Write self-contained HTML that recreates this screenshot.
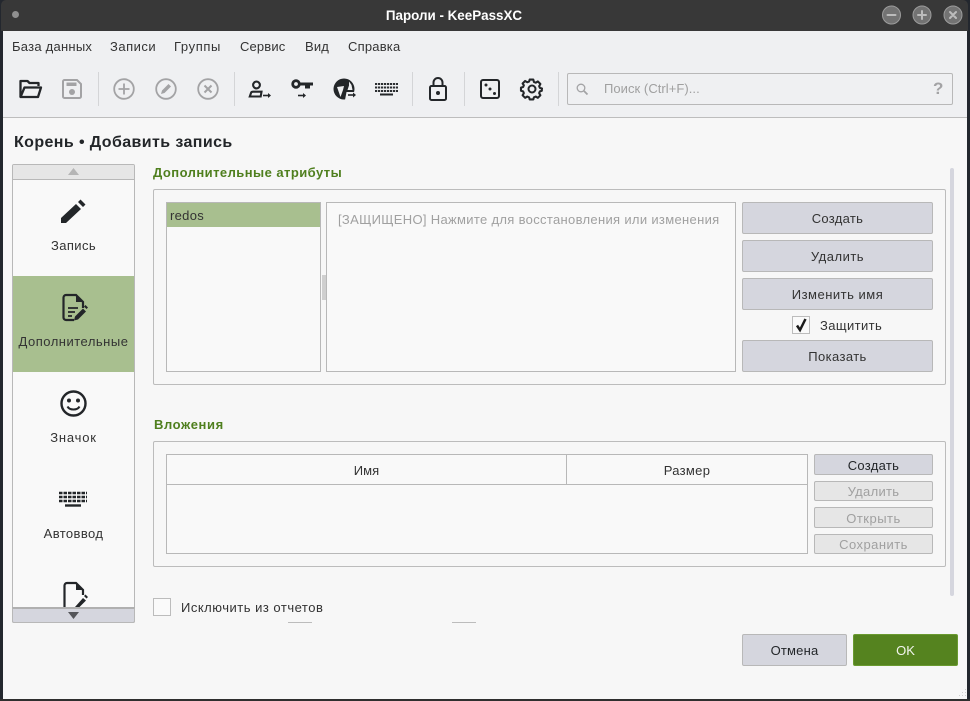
<!DOCTYPE html>
<html><head><meta charset="utf-8">
<style>
html,body{margin:0;padding:0;width:970px;height:701px;overflow:hidden;background:#23272e}
*{box-sizing:border-box}
body{font-family:"Liberation Sans","Noto Sans CJK SC",sans-serif;font-size:13px;color:#333}
.a{position:absolute}
.t{position:absolute;white-space:nowrap;line-height:16px}
.c{text-align:center}
.btn{position:absolute;background:#d5d6de;border:1px solid #b8b8b8;border-radius:2px;text-align:center;color:#333}
.dis{background:#e6e6e6;color:#a0a0a0}
.sep{position:absolute;width:1px;height:34px;top:72px;background:#d4d5d7}
svg{position:absolute;overflow:visible}
</style></head>
<body>
<div class="a" style="left:3px;top:31px;width:964px;height:668px;background:#f7f7f7"></div>
<div class="a" style="left:1px;top:0;width:967px;height:31px;background:#383838;border-radius:5px 5px 0 0"></div>
<div class="a" style="left:3px;top:31px;width:964px;height:86px;background:#eff0f2"></div>
<div class="a" style="left:3px;top:117px;width:964px;height:1px;background:#bdbdbd"></div>
<div class="a" style="left:0;top:699px;width:970px;height:2px;background:#2f2f2f"></div>
<div class="a" style="left:12px;top:11px;width:7px;height:7px;border-radius:50%;background:#8f8f8f"></div>
<div class="t c" style="left:354px;top:8px;width:200px;color:#fff;font-weight:bold;font-size:13.4px">Пароли - KeePassXC</div>

<svg style="left:882px;top:5px" width="84" height="20" viewBox="0 0 84 20">
<g fill="#737373" stroke="#9c9c9c"><circle cx="9.500" cy="10" r="9"/><circle cx="40" cy="10" r="9"/><circle cx="71" cy="10" r="9"/></g>
<g stroke="#bcbcbc" stroke-width="2" stroke-linecap="round"><path d="M5.500 10h8M36 10h8M40 6v8M68 7l6 6M74 7l-6 6"/></g>
</svg>

<div class="t" style="left:12px;top:39px;letter-spacing:.25px">База данных</div>
<div class="t" style="left:110px;top:39px;letter-spacing:.5px">Записи</div>
<div class="t" style="left:174px;top:39px;letter-spacing:.6px">Группы</div>
<div class="t" style="left:240px;top:39px;letter-spacing:.15px">Сервис</div>
<div class="t" style="left:305px;top:39px;letter-spacing:.15px">Вид</div>
<div class="t" style="left:348px;top:39px;letter-spacing:.2px">Справка</div>

<!-- toolbar icons -->
<svg style="left:19px;top:79px" width="24" height="20" viewBox="0 0 24 20"><path d="M1.500 18V2h7l2 2h9v3" fill="none" stroke="#232629" stroke-width="2.300" stroke-linejoin="round"/><path d="M1.500 18h17.500l3-9.500H5.500z" fill="none" stroke="#232629" stroke-width="2.300" stroke-linejoin="round"/></svg>
<svg style="left:62px;top:79px" width="20" height="20" viewBox="0 0 20 20"><path d="M1 2.500A1.500 1.500 0 0 1 2.500 1H15l4 4v12.500a1.500 1.500 0 0 1-1.500 1.500h-15A1.500 1.500 0 0 1 1 17.500z" fill="none" stroke="#a3a3a5" stroke-width="2"/><path d="M4.500 3.500h10v3.500h-10z" fill="#a3a3a5"/><circle cx="10" cy="13" r="3" fill="#a3a3a5"/></svg>
<div class="sep" style="left:98px"></div>
<svg style="left:113px;top:78px" width="22" height="22" viewBox="0 0 22 22"><circle cx="11" cy="11" r="9.800" fill="none" stroke="#a3a3a5" stroke-width="1.800"/><path d="M11 5.500v11M5.500 11h11" stroke="#a3a3a5" stroke-width="1.800"/></svg>
<svg style="left:155px;top:78px" width="22" height="22" viewBox="0 0 22 22"><circle cx="11" cy="11" r="9.800" fill="none" stroke="#a3a3a5" stroke-width="1.800"/><path d="M6 16l1-3.500 6.500-6.500 2.500 2.500L9.500 15z" fill="#a3a3a5"/></svg>
<svg style="left:197px;top:78px" width="22" height="22" viewBox="0 0 22 22"><circle cx="11" cy="11" r="9.800" fill="none" stroke="#a3a3a5" stroke-width="1.800"/><path d="M7.500 7.500l7 7M14.500 7.500l-7 7" stroke="#a3a3a5" stroke-width="2"/></svg>
<div class="sep" style="left:234px"></div>
<svg style="left:248px;top:79px" width="24" height="20" viewBox="0 0 24 20"><circle cx="8.500" cy="6" r="3.400" fill="none" stroke="#232629" stroke-width="2.100"/><path d="M1.800 17.500l1.300-3.800c.3-.7 1-1 2-1h8.400l-.8 4.800z" fill="none" stroke="#232629" stroke-width="2.100"/><path d="M15 16.500h7" stroke="#232629" stroke-width="1.600"/><path d="M20 14l3 2.500-3 2.500z" fill="#232629"/></svg>
<svg style="left:291px;top:79px" width="24" height="20" viewBox="0 0 24 20"><circle cx="5" cy="5" r="3.300" fill="none" stroke="#232629" stroke-width="2.800"/><path d="M8 3.500h14v3h-3v3h-5v-3H8z" fill="#232629"/><path d="M7 16.500h7" stroke="#232629" stroke-width="1.600"/><path d="M12 14l3 2.500-3 2.500z" fill="#232629"/></svg>
<svg style="left:333px;top:78px" width="24" height="22" viewBox="0 0 24 22"><circle cx="11" cy="11" r="10.500" fill="#232629"/><path d="M16 3.500l2.500 3.500 1 5h-5l1.500-4.500zM4 9l7-1-1 4-2.500 7" fill="#eff0f2"/><path d="M13.500 14h10.500v8H12z" fill="#eff0f2"/><path d="M15 17h6.500" stroke="#232629" stroke-width="1.600"/><path d="M20 14.500l3 2.500-3 2.500z" fill="#232629"/></svg>
<svg style="left:375px;top:83px" width="23" height="13" viewBox="0 0 23 13"><path d="M0 1h23M0 4.500h23M0 8h23" stroke="#2b2e31" stroke-width="2" stroke-dasharray="2.200 .8"/><path d="M5 11.500h13" stroke="#232629" stroke-width="2"/></svg>
<div class="sep" style="left:412px"></div>
<svg style="left:429px;top:77px" width="18" height="24" viewBox="0 0 18 24"><rect x="1" y="9" width="16" height="14" rx="1.500" fill="none" stroke="#232629" stroke-width="2"/><path d="M4.500 9V5.500a4.500 4.500 0 0 1 9 0V9" fill="none" stroke="#232629" stroke-width="2"/><circle cx="9" cy="16" r="2" fill="#232629"/></svg>
<div class="sep" style="left:464px"></div>
<svg style="left:480px;top:79px" width="20" height="20" viewBox="0 0 20 20"><rect x="1" y="1" width="18" height="18" rx="2" fill="none" stroke="#232629" stroke-width="2"/><circle cx="6" cy="6" r="1.500" fill="#232629"/><circle cx="10" cy="10" r="1.500" fill="#232629"/><circle cx="14.500" cy="14.500" r="1.500" fill="#232629"/></svg>
<svg style="left:521px;top:78px" width="22" height="22" viewBox="0 0 22 22"><circle cx="11" cy="11" r="3.500" fill="none" stroke="#232629" stroke-width="2"/><path d="M9 1.500h4l.7 2.700 2 .8 2.400-1.400 2.800 2.800-1.400 2.400.8 2 2.400.7-.2 0V14l-2.200.6-.8 2 1.400 2.400-2.800 2.800-2.400-1.400-2 .8-.7 2.400H9l-.7-2.400-2-.8-2.400 1.400L1.100 19l1.400-2.400-.8-2-2.400-.6v-3.500l2.400-.7.800-2L1.100 5.900 3.900 3.100l2.400 1.400 2-.8z" transform="translate(.6 .2) scale(.9)" fill="none" stroke="#232629" stroke-width="2.300" stroke-linejoin="round"/></svg>
<div class="sep" style="left:558px"></div>

<div class="a" style="left:567px;top:73px;width:386px;height:32px;background:#eff0f2;border:1px solid #b8b8b8;border-radius:2px"></div>
<svg style="left:576px;top:83px" width="13" height="13" viewBox="0 0 13 13"><circle cx="5" cy="5" r="3.800" fill="none" stroke="#a3a3a5" stroke-width="1.300"/><path d="M8 8l3.500 3.500" stroke="#a3a3a5" stroke-width="1.800"/></svg>
<div class="t" style="left:604px;top:81px;color:#a0a0a0;letter-spacing:.05px">Поиск (Ctrl+F)...</div>
<div class="t" style="left:933px;top:81px;color:#a3a3a5;font-weight:bold;font-size:17px">?</div>

<div class="t" style="left:14px;top:135px;font-weight:bold;font-size:16px;color:#232629;letter-spacing:.4px">Корень • Добавить запись</div>

<!-- sidebar -->
<div class="a" style="left:12px;top:164px;width:123px;height:459px;background:#f9f9f9;border:1px solid #b8b8b8;border-radius:2px;overflow:hidden">
<div class="a" style="left:0;top:0;width:121px;height:15px;background:#e6e6e6;border-bottom:1px solid #b8b8b8"></div>
<div class="a" style="left:0;top:111px;width:121px;height:96px;background:#a8bf8f"></div>
</div>
<svg style="left:68px;top:168px" width="11" height="8"><path d="M5.500 0L11 7H0z" fill="#b5b5b5"/></svg>

<svg style="left:61px;top:199px" width="25" height="25" viewBox="0 0 25 25"><path d="M0 24v-5L15 5l5 5L5 24zM17 3l2.500-2.500 5 5L22 8z" fill="#232629"/></svg>
<div class="t c" style="left:13px;top:238px;width:121px;letter-spacing:.4px">Запись</div>

<svg style="left:62px;top:294px" width="26" height="28" viewBox="0 0 26 28"><path d="M12 26H4a2.500 2.500 0 0 1-2.500-2.500v-20A2.500 2.500 0 0 1 4 1h10l7 7v6" fill="none" stroke="#232629" stroke-width="2.200"/><path d="M14 1v7h7z" fill="#232629"/><path d="M6 14h10M6 18h7M6 22h4" stroke="#232629" stroke-width="1.800"/><path d="M12 26.500l1-4 8-8 3 3-8 8zM22 12.500l1.500-1.500 2.500 2.500-1.500 1.500z" fill="#232629"/></svg>
<div class="t c" style="left:13px;top:334px;width:121px;letter-spacing:.5px">Дополнительные</div>

<svg style="left:60px;top:390px" width="27" height="27" viewBox="0 0 27 27"><circle cx="13.500" cy="13.500" r="12" fill="none" stroke="#232629" stroke-width="2.400"/><circle cx="9" cy="10.500" r="2" fill="#232629"/><circle cx="18" cy="10.500" r="2" fill="#232629"/><path d="M7.500 16.500c2 4 10 4 12 0" fill="none" stroke="#232629" stroke-width="2"/></svg>
<div class="t c" style="left:13px;top:430px;width:121px;letter-spacing:.8px">Значок</div>

<svg style="left:59px;top:491px" width="28" height="16" viewBox="0 0 28 16"><path d="M0 2h28M0 6h28M0 10h28" stroke="#232629" stroke-width="2.400" stroke-dasharray="3.500 1"/><path d="M6 14.500h16" stroke="#232629" stroke-width="2.400"/></svg>
<div class="t c" style="left:13px;top:526px;width:121px;letter-spacing:.4px">Автоввод</div>

<svg style="left:62px;top:582px" width="26" height="25" viewBox="0 0 26 25"><path d="M2.500 25V3.500A2.500 2.500 0 0 1 5 1h9l7 7v5" fill="none" stroke="#232629" stroke-width="2.200"/><path d="M14 1v7h7z" fill="#232629"/><path d="M13 25l8-9 3 2.500-6.500 6.500zM22 14l1.500-1.500 2.500 2.500-1.500 1.500z" fill="#232629"/></svg>

<div class="a" style="left:12px;top:607px;width:123px;height:16px;background:#d5d6de;border:1px solid #b8b8b8;border-top:2px solid #b0b0b0;border-radius:0 0 2px 2px"></div>
<svg style="left:68px;top:612px" width="11" height="8"><path d="M0 0h11L5.500 7z" fill="#55565a"/></svg>

<!-- section 1 -->
<div class="t" style="left:153px;top:165px;font-weight:bold;color:#4f7f1e;letter-spacing:.45px">Дополнительные атрибуты</div>
<div class="a" style="left:153px;top:189px;width:793px;height:196px;border:1px solid #bcbcbc;border-radius:2px"></div>
<div class="a" style="left:166px;top:202px;width:155px;height:170px;background:#f9f9f9;border:1px solid #b8b8b8"><div class="a" style="left:0;top:0;width:153px;height:24px;background:#a8bf8f"></div></div>
<div class="t" style="left:170px;top:208px;letter-spacing:.3px">redos</div>
<div class="a" style="left:322px;top:275px;width:4px;height:25px;background:#cfcfcf"></div>
<div class="a" style="left:326px;top:202px;width:410px;height:170px;background:#f9f9f9;border:1px solid #b8b8b8"></div>
<div class="t" style="left:338px;top:212px;color:#a0a0a0;letter-spacing:.32px">[ЗАЩИЩЕНО] Нажмите для восстановления или изменения</div>

<div class="btn" style="left:742px;top:202px;width:191px;height:32px;line-height:31px;letter-spacing:.3px">Создать</div>
<div class="btn" style="left:742px;top:240px;width:191px;height:32px;line-height:32px;letter-spacing:.5px">Удалить</div>
<div class="btn" style="left:742px;top:278px;width:191px;height:32px;line-height:31px;letter-spacing:.5px">Изменить имя</div>
<div class="a" style="left:792px;top:316px;width:18px;height:18px;background:#fafafa;border:1px solid #bcbcbc"></div>
<svg style="left:795px;top:318px" width="13" height="14" viewBox="0 0 13 14"><path d="M2 7.500L5 12 10.500 1" fill="none" stroke="#1c1c1c" stroke-width="2.500"/></svg>
<div class="t" style="left:820px;top:318px;letter-spacing:.4px">Защитить</div>
<div class="btn" style="left:742px;top:340px;width:191px;height:32px;line-height:31px;letter-spacing:.4px">Показать</div>

<!-- section 2 -->
<div class="t" style="left:154px;top:417px;font-weight:bold;color:#4f7f1e;letter-spacing:.6px">Вложения</div>
<div class="a" style="left:153px;top:441px;width:793px;height:126px;border:1px solid #bcbcbc;border-radius:2px"></div>
<div class="a" style="left:166px;top:454px;width:642px;height:100px;background:#f9f9f9;border:1px solid #b8b8b8">
<div class="a" style="left:0;top:29px;width:640px;height:1px;background:#b8b8b8"></div>
<div class="a" style="left:399px;top:0;width:1px;height:29px;background:#b8b8b8"></div>
</div>
<div class="t c" style="left:167px;top:463px;width:399px;letter-spacing:.1px">Имя</div>
<div class="t c" style="left:567px;top:463px;width:240px;letter-spacing:.3px">Размер</div>
<div class="btn" style="left:814px;top:454px;width:119px;height:21px;line-height:22px;color:#232629;letter-spacing:.3px">Создать</div>
<div class="btn dis" style="left:814px;top:481px;width:119px;height:20px;line-height:19px;letter-spacing:.3px">Удалить</div>
<div class="btn dis" style="left:814px;top:507px;width:119px;height:21px;line-height:22px;letter-spacing:.5px">Открыть</div>
<div class="btn dis" style="left:814px;top:534px;width:119px;height:20px;line-height:19px;letter-spacing:.45px">Сохранить</div>

<div class="a" style="left:153px;top:598px;width:18px;height:18px;background:#fafafa;border:1px solid #bcbcbc"></div>
<div class="t" style="left:181px;top:600px;letter-spacing:.5px">Исключить из отчетов</div>
<div class="a" style="left:288px;top:622px;width:24px;height:1px;background:#bcbcbc"></div>
<div class="a" style="left:452px;top:622px;width:24px;height:1px;background:#bcbcbc"></div>

<!-- scrollbar -->
<div class="a" style="left:950px;top:168px;width:4px;height:428px;background:#d5d6de;border-radius:2px"></div>

<div class="btn" style="left:742px;top:634px;width:105px;height:32px;line-height:31px;color:#232629;letter-spacing:.2px">Отмена</div>
<div class="btn" style="left:853px;top:634px;width:105px;height:32px;line-height:31px;background:#55831f;border-color:#6a9a30;color:#f2f5ee">OK</div>

<svg style="left:958px;top:688px" width="10" height="10"><g fill="#cfcfcf"><rect x="7" y="1" width="1" height="1"/><rect x="4" y="4" width="1" height="1"/><rect x="7" y="4" width="1" height="1"/><rect x="1" y="7" width="1" height="1"/><rect x="4" y="7" width="1" height="1"/><rect x="7" y="7" width="1" height="1"/></g></svg>
</body></html>
